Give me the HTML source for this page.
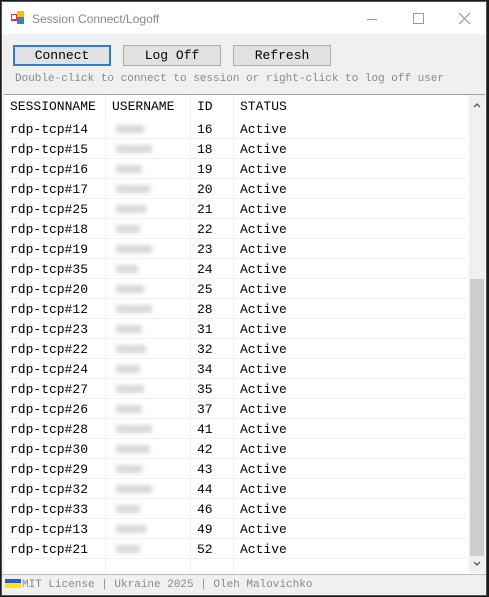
<!DOCTYPE html>
<html><head><style>
*{margin:0;padding:0;box-sizing:border-box}
body{width:489px;height:597px;background:#1a1a1a;position:relative;overflow:hidden;font-family:"Liberation Mono",monospace}
.win{position:absolute;left:1px;top:1px;width:486px;height:595px;background:#f0f0f0;border:1px solid #555}
.title{position:absolute;left:0;top:0;width:100%;height:32px;background:#fff;font-family:"Liberation Sans",sans-serif;font-size:12px;color:#888}
.title span{position:absolute;left:30px;top:10px}
.btn{position:absolute;top:43px;height:21px;width:98px;background:#e1e1e1;border:1px solid #adadad;font-size:13px;text-align:center;line-height:19px;color:#000}
.hint{position:absolute;left:13px;top:71px;font-size:11px;color:#8a8a8a;white-space:nowrap}
.list{position:absolute;left:2px;top:92px;width:481px;height:480px;background:#fff;border-top:1px solid #a0a0a0}
.row{position:absolute;left:0;height:20px;width:464px;font-size:13px;border-bottom:1px solid #f0f0f0}
.row div{position:absolute;top:3px;white-space:nowrap}
.vl{position:absolute;top:0;width:1px;height:478px;background:#f0f0f0}
.blur{position:absolute;top:6px;height:8px;background:#d8d8d8;filter:blur(2px)}
.sb{position:absolute;left:465px;top:0;width:16px;height:478px;background:#f0f0f0}
.thumb{position:absolute;left:466px;top:184px;width:14px;height:277px;background:#cdcdcd}
.foot{position:absolute;left:0;top:572px;width:100%;height:21px;border-top:1px solid #bbb;font-size:11px;color:#8a8a8a}
</style></head><body>
<div class="win">
<div class="title">
<svg style="position:absolute;left:9px;top:9px" width="14" height="13"><rect x="0" y="3" width="7" height="7" fill="#d33"/><rect x="6" y="0" width="7" height="7" fill="#f5c000"/><rect x="6" y="6" width="7" height="7" fill="#3a7bd5"/><rect x="1" y="4" width="4" height="4" fill="#fff"/></svg>
<span>Session Connect/Logoff</span>
<div style="position:absolute;left:365px;top:17px;width:10px;height:1px;background:#999"></div>
<div style="position:absolute;left:411px;top:11px;width:11px;height:11px;border:1px solid #999"></div>
<svg style="position:absolute;left:456px;top:10px" width="13" height="13"><path d="M1 1L12 12M12 1L1 12" stroke="#999" stroke-width="1.2"/></svg>
</div>
<div class="btn" style="left:11px;border:2px solid #2f7cd0;line-height:17px">Connect</div>
<div class="btn" style="left:121px">Log Off</div>
<div class="btn" style="left:231px">Refresh</div>
<div class="hint">Double-click to connect to session or right-click to log off user</div>
<div class="list">
<div class="vl" style="left:101px"></div><div class="vl" style="left:186px"></div><div class="vl" style="left:229px"></div>
<div class="row" style="top:0;height:24px;border-bottom:none"><div style="left:6px;top:4px">SESSIONNAME</div><div style="left:108px;top:4px">USERNAME</div><div style="left:193px;top:4px">ID</div><div style="left:236px;top:4px">STATUS</div></div>
<div id="rows"></div>
<div class="sb"></div><div class="thumb"></div>
<svg style="position:absolute;left:469px;top:7px" width="8" height="6"><path d="M1 5L4 2L7 5" stroke="#555" fill="none" stroke-width="1.3"/></svg>
<svg style="position:absolute;left:469px;top:466px" width="8" height="6"><path d="M1 1L4 4L7 1" stroke="#555" fill="none" stroke-width="1.3"/></svg>
</div>
<div class="foot">
<div style="position:absolute;left:3px;top:4px;width:16px;height:4px;background:#2a5dcc"></div>
<div style="position:absolute;left:3px;top:8px;width:16px;height:5px;background:#ffe600"></div>
<div style="position:absolute;left:20px;top:4px;white-space:nowrap">MIT License | Ukraine 2025 | Oleh Malovichko</div>
</div>
</div>
<script>
var d=[[14,16],[15,18],[16,19],[17,20],[25,21],[18,22],[19,23],[35,24],[20,25],[12,28],[23,31],[22,32],[24,34],[27,35],[26,37],[28,41],[30,42],[29,43],[32,44],[33,46],[13,49],[21,52]];
var w=[28,36,26,34,30,24,36,22,28,36,26,30,24,28,26,36,34,26,36,24,30,24];
var h='';d.forEach(function(r,i){h+='<div class="row" style="top:'+(24+i*20)+'px"><div style="left:6px">rdp-tcp#'+r[0]+'</div><span class="blur" style="left:112px;width:'+w[i]+'px"></span><div style="left:193px">'+r[1]+'</div><div style="left:236px">Active</div></div>';});
document.getElementById('rows').innerHTML=h;
</script>
</body></html>
